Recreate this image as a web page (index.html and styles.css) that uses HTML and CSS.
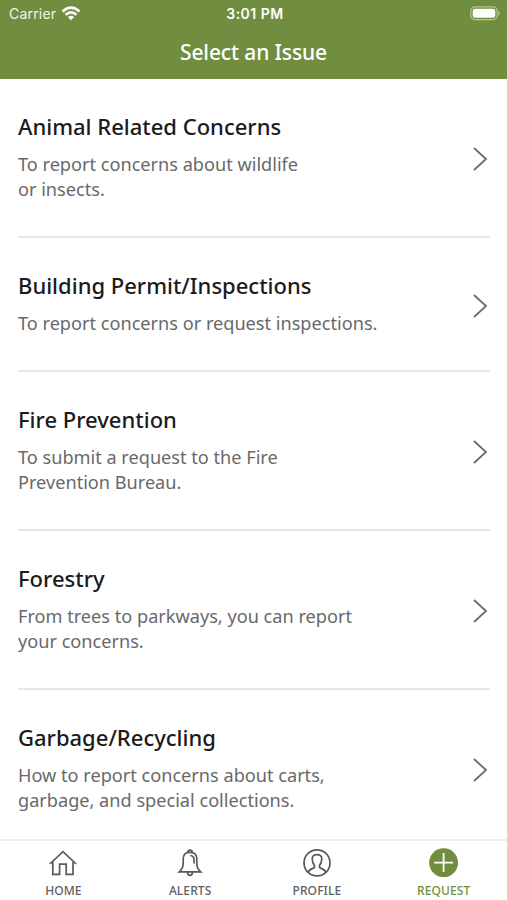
FILE: index.html
```html
<!DOCTYPE html>
<html lang="en">
<head>
<meta charset="utf-8">
<title>Select an Issue</title>
<link rel="stylesheet" href="styles.css">
</head>
<body>
<div class="app">
  <header class="header">
    <div class="status">
      <div class="carrier"><span>Carrier</span>
        <svg class="wifi" width="20" height="15" viewBox="0 0 20 15" fill="none" stroke="#fff" stroke-width="2.7"><path d="M1.5 5.4Q10 -2.3 18.5 5.4M4.6 8.8Q10 4 15.4 8.8"/><path d="M6.9 11Q10 8.4 13.1 11L10 14.3Z" fill="#fff" stroke="none"/></svg>
      </div>
      <div class="time">3:01 PM</div>
      <svg class="battery" width="31" height="15" viewBox="0 0 31 15"><rect x=".8" y=".8" width="26.4" height="12.8" rx="4" fill="none" stroke="#b3c69b" stroke-width="1.2"/><rect x="2.7" y="2.7" width="22.6" height="9" rx="2.2" fill="#fff"/><path d="M28.5 5v4.4q3-2.2 0-4.4" fill="#b3c69b"/></svg>
    </div>
    <h1 class="heading">Select an Issue</h1>
  </header>
  <main class="list">
    <section class="row">
      <div><h2>Animal Related Concerns</h2><p>To report concerns about wildlife<br>or insects.</p></div>
      <svg class="chevron" width="16" height="24" viewBox="0 0 16 24"><path d="M1 1L13 12L1 23"/></svg>
    </section>
    <section class="row">
      <div><h2>Building Permit/Inspections</h2><p>To report concerns or request inspections.</p></div>
      <svg class="chevron" width="16" height="24" viewBox="0 0 16 24"><path d="M1 1L13 12L1 23"/></svg>
    </section>
    <section class="row">
      <div><h2>Fire Prevention</h2><p>To submit a request to the Fire<br>Prevention Bureau.</p></div>
      <svg class="chevron" width="16" height="24" viewBox="0 0 16 24"><path d="M1 1L13 12L1 23"/></svg>
    </section>
    <section class="row">
      <div><h2>Forestry</h2><p>From trees to parkways, you can report<br>your concerns.</p></div>
      <svg class="chevron" width="16" height="24" viewBox="0 0 16 24"><path d="M1 1L13 12L1 23"/></svg>
    </section>
    <section class="row">
      <div><h2>Garbage/Recycling</h2><p>How to report concerns about carts,<br>garbage, and special collections.</p></div>
      <svg class="chevron" width="16" height="24" viewBox="0 0 16 24"><path d="M1 1L13 12L1 23"/></svg>
    </section>
  </main>
  <nav class="tabs">
    <div class="tab">
      <svg width="30" height="30" viewBox="0 0 30 30"><path d="M1.8 15L15 2.7L28.2 15M4.8 13V25.3H11.6V15.2H18.2V25.3H25V13"/></svg>
      <span>HOME</span>
    </div>
    <div class="tab">
      <svg width="30" height="30" viewBox="0 0 30 30"><path d="M4.3 22.8Q8.2 19.8 8.2 14V9.5Q8.4 3.4 15 3.4Q21.6 3.4 21.8 9.5V14Q21.8 19.8 25.7 22.8ZM12.8 3.2Q13 1.2 15 1.2Q17 1.2 17.2 3.2M12.6 23.2Q12.6 26.4 15 26.4Q17.4 26.4 17.4 23.2M15.2 6.5Q19 7 19 10.5V14.5"/></svg>
      <span>ALERTS</span>
    </div>
    <div class="tab">
      <svg width="30" height="30" viewBox="0 0 30 30"><circle cx="15" cy="13.9" r="13"/><path d="M6.3 23.5C6.7 19.8 11 20 12.5 18.4V16.6C10.8 14.5 10.2 12.2 10.2 9.8Q10.4 5.7 15 5.7Q19.6 5.7 19.8 9.8C19.8 12.2 19.2 14.5 17.5 16.6V18.4C19 20 23.3 19.8 23.7 23.5"/></svg>
      <span>PROFILE</span>
    </div>
    <div class="tab active">
      <svg width="30" height="30" viewBox="0 0 30 30"><circle class="disc" cx="14.6" cy="13.7" r="14.4"/><path class="plus" d="M5.1 13.6H24.1M14.6 4.1V23.1"/></svg>
      <span>REQUEST</span>
    </div>
  </nav>
</div>
</body>
</html>
```
FILE: styles.css
```css
* { box-sizing: border-box; }
body { margin: 0; background: #fff; font-family: "Noto Sans", sans-serif; }
h1, h2, p { margin: 0; }
svg { display: block; flex: none; overflow: visible; }
.app { height: 900px; display: flex; flex-direction: column; overflow: hidden; }
.header { height: 79px; flex: none; background: #718e40; color: #fff; }
.status { height: 27px; display: grid; grid-template-columns: 1fr auto 1fr; align-items: center; padding: 0 6px 0 9px; font-family: Inter, sans-serif; font-size: 14px; line-height: 27px; }
.carrier { display: flex; align-items: center; gap: 5px; color: #f0f5e8; letter-spacing: .2px; }
.time { font-weight: 600; letter-spacing: .5px; }
.battery { justify-self: end; }
.heading { font-size: 21px; font-weight: 500; line-height: 30px; text-align: center; padding-top: 10px; letter-spacing: -.12px; }
.list { flex: 1; min-height: 0; overflow: hidden; padding: 0 17px 0 18px; }
.row { display: flex; justify-content: space-between; align-items: center; padding: 32px 1px 34px 0; border-bottom: 2px solid #e6e6e6; }
.row h2 { font-size: 22px; font-weight: 500; line-height: 30px; color: #1b1b1b; white-space: nowrap; }
.row p { margin-top: 11px; font-size: 18.15px; line-height: 25px; color: #696969; white-space: nowrap; }
.chevron { fill: none; stroke: #6b6b6b; stroke-width: 1.8; margin-top: 5px; }
.tabs { height: 61px; flex: none; display: grid; grid-template-columns: repeat(4, 1fr); border-top: 2px solid #ededed; }
.tab { display: flex; flex-direction: column; align-items: center; padding-top: 8px; font-size: 12px; font-weight: 500; line-height: 16px; color: #606060; }
.tab svg { fill: none; stroke: #595959; stroke-width: 1.7; }
.tab span { margin-top: 4px; letter-spacing: .1px; }
.tab.active { color: #718e40; }
.tab .disc { fill: #718e40; stroke: none; }
.tab .plus { stroke: #fff; stroke-width: 1.8; }
```
